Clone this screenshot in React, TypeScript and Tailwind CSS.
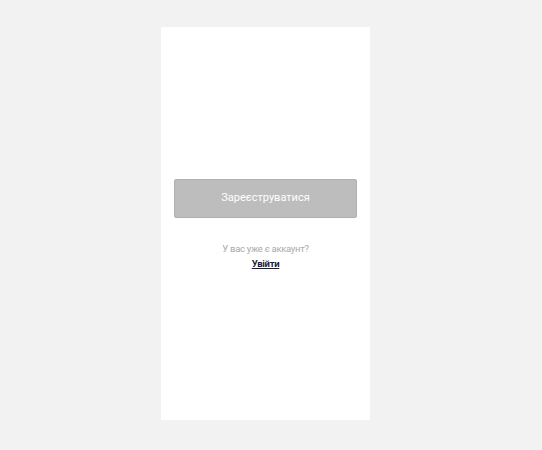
export default function App() {
  return (
    <div className="min-h-[450px] w-full bg-[#f2f2f2] pt-[27px]" style={{ fontFamily: "Roboto, 'Liberation Sans', sans-serif" }}>
      <div className="ml-[161px] flex h-[393px] w-[209px] flex-col items-center bg-white px-[13px] pt-[152px]">
        <button className="flex h-[39px] w-full items-center justify-center rounded-[2px] border border-[#b0b0b0] bg-[#bdbdbd] text-[11px] text-white">
          Зареєструватися
        </button>
        <p className="mt-[25px] text-[9.5px] leading-[12px] tracking-[-0.3px] text-[#a8a8a8]">У вас уже є аккаунт?</p>
        <a href="#" className="mt-[3px] text-[9.5px] font-bold leading-[12px] tracking-[-0.3px] text-[#1c1c3c] underline">
          Увійти
        </a>
      </div>
    </div>
  );
}
